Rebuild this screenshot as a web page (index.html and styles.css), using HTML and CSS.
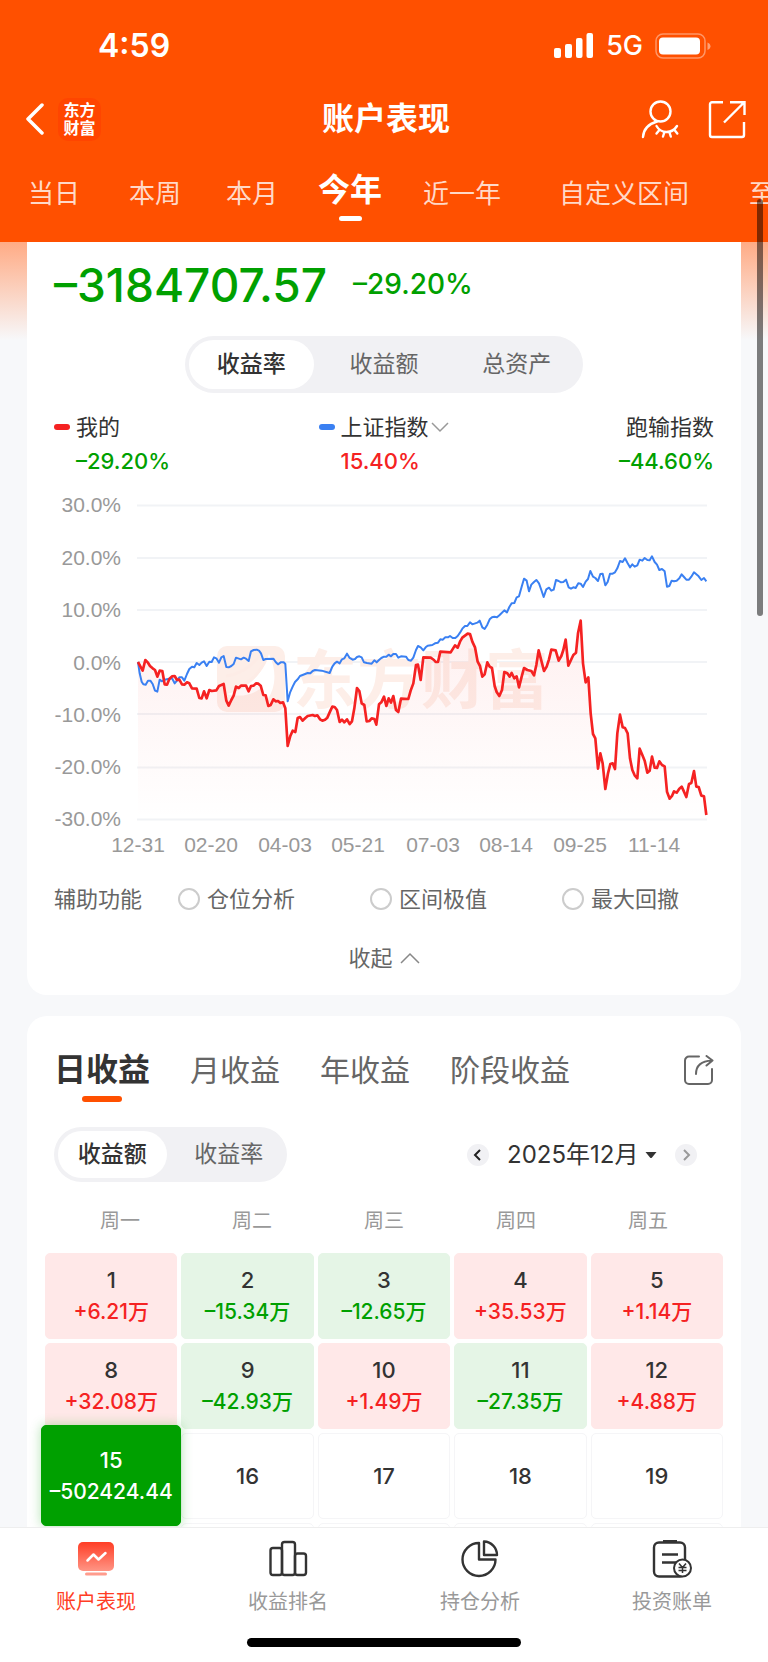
FILE: index.html
```
<!DOCTYPE html>
<html lang="zh-CN">

<head>
    <meta charset="UTF-8">
    <meta name="viewport" content="width=device-width, initial-scale=1.0">
    <title>账户表现</title>
    <link rel="stylesheet" href="styles.css">
</head>

<body>
    <div class="app">
        <header class="header">
            <div class="status-bar">
                <span class="time">4:59</span>
                <div class="status-icons">
                    <svg width="40" height="26" viewBox="0 0 40 26" fill="#fff">
                        <rect x="0" y="15" width="7" height="10" rx="2" />
                        <rect x="11" y="11" width="7" height="14" rx="2" />
                        <rect x="22" y="5" width="6.5" height="20" rx="2" />
                        <rect x="32.500" y="0" width="6.500" height="25" rx="2" />
                    </svg>
                    <span class="network">5G</span>
                    <svg width="56" height="26" viewBox="0 0 56 26">
                        <rect x="1" y="1" width="49" height="24" rx="7" fill="none" stroke="#fff" stroke-opacity=".4" stroke-width="1.5" />
                        <rect x="4" y="4.500" width="41" height="17" rx="4" fill="#fff" />
                        <path d="M52.500 9.500c4 1.500 4 6 0 7.500z" fill="#fff" fill-opacity=".45" />
                    </svg>
                </div>
            </div>

            <div class="title-bar">
                <div class="title-left">
                    <button class="icon-btn" aria-label="返回">
                        <svg width="18" height="32" viewBox="0 0 18 32" fill="none" stroke="#fff" stroke-width="3.500" stroke-linecap="round" stroke-linejoin="round">
                            <path d="M16 2L2 16l14 14" />
                        </svg>
                    </button>
                    <span class="brand">东方<br>财富</span>
                </div>
                <h1>账户表现</h1>
                <div class="title-right">
                    <button class="icon-btn" aria-label="隐藏账户">
                        <svg width="40" height="40" viewBox="0 0 40 40" fill="none" stroke="#fff" stroke-width="2.400" stroke-linecap="round">
                            <circle cx="20.500" cy="12.500" r="10" />
                            <path d="M17 22.500C8.500 25 3.500 30 3 38" />
                            <path d="M16.500 27c4.500 8 15.500 8 20.500 0M19 31.500l-2.500 3M24.300 33.500l-1.300 4M29.500 33.500l1.300 4M34.500 31l2.800 3.500" />
                        </svg>
                    </button>
                    <button class="icon-btn" aria-label="分享">
                        <svg width="40" height="40" viewBox="0 0 40 40" fill="none" stroke="#fff" stroke-width="2.400">
                            <path d="M17 3.200H6a2 2 0 0 0-2 2V36a2 2 0 0 0 2 2h30a2 2 0 0 0 2-2V23" />
                            <path d="M24 3.200h14.500V16M38 3.500L18 23.500" />
                        </svg>
                    </button>
                </div>
            </div>

            <nav class="period-tabs">
                <a href="#">当日</a>
                <a href="#">本周</a>
                <a href="#">本月</a>
                <a href="#" class="active">今年</a>
                <a href="#">近一年</a>
                <a href="#">自定义区间</a>
                <a href="#">至今</a>
            </nav>
        </header>

        <main class="content">
            <section class="card summary">
                <div class="total">
                    <span class="total-amount">–3184707.57</span>
                    <span class="total-rate">–29.20%</span>
                </div>

                <div class="segment segment-main">
                    <button class="active">收益率</button>
                    <button>收益额</button>
                    <button>总资产</button>
                </div>

                <div class="legend">
                    <div class="legend-item">
                        <div class="legend-name"><i class="dash red-bg"></i>我的</div>
                        <div class="legend-value down">–29.20%</div>
                    </div>
                    <div class="legend-item">
                        <div class="legend-name">
                            <i class="dash blue-bg"></i>
                            <select aria-label="对比指数">
                                <option>上证指数</option>
                            </select>
                            <svg width="20" height="12" viewBox="0 0 20 12" fill="none" stroke="#999" stroke-width="1.500">
                                <path d="M2 2l8 8 8-8" />
                            </svg>
                        </div>
                        <div class="legend-value up">15.40%</div>
                    </div>
                    <div class="legend-item">
                        <div class="legend-name">跑输指数</div>
                        <div class="legend-value down">–44.60%</div>
                    </div>
                </div>

                <svg class="chart" viewBox="0 0 660 370">
                    <defs>
                        <linearGradient id="areaFill" gradientUnits="userSpaceOnUse" x1="0" y1="390" x2="0" y2="990">
                            <stop offset="0" stop-color="#f52222" stop-opacity=".07" />
                            <stop offset="1" stop-color="#f52222" stop-opacity="0" />
                        </linearGradient>
                    </defs>
                    <g class="grid-lines">
                        <path d="M83 15.500H653M83 68H653M83 120H653M83 172H653M83 224H653M83 277.500H653M83 329.500H653" />
                    </g>
                    <g class="watermark">
                        <rect x="163" y="156" width="68" height="66" rx="10" />
                        <path d="M173 204c18-4 34-16 42-40 8 16 7 34-2 46-4-4-5-8-6-12-7 6-20 10-34 6z" fill="#fff" />
                        <path d="M172 186c14-2 27-10 36-24M176 199c16-3 30-14 37-32" stroke="#fdece6" stroke-width="3" fill="none" />
                        <text x="239" y="213">东方财富</text>
                    </g>
                    <!-- series share one 3x coordinate space -->
                    <g transform="translate(-14 0) scale(.33333)">
                        <path class="area" d="M294 516L308 542 316 510 330 528 345 540 352 560 359 542 367 543 374 583 381 584 388 567 404 558 411 570 418 569 426 583 433 584 441 577 448 580 456 595 470 596 478 624 485 625 492 604 500 625 508 600 515 603 529 601 537 588 551 582 559 632 566 647 574 630 581 617 588 590 596 594 603 587 618 587 626 604 633 588 641 587 648 580 655 581 662 587 670 615 677 616 685 648 692 645 700 628 707 634 714 633 721 639 729 637 736 655 743 768 751 738 758 722 766 726 773 684 780 681 788 692 803 678 832 676 847 692 862 683 877 650 891 660 899 696 906 689 913 697 921 688 929 702 936 694 943 655 951 594 958 603 965 640 973 645 980 694 995 685 1003 687 1009 704 1017 643 1032 620 1039 648 1046 625 1053 638 1060 618 1068 660 1075 666 1083 626 1105 627 1120 580 1128 525 1134 524 1142 570 1150 502 1172 503 1192 517 1201 485 1232 487 1245 466 1253 473 1267 443 1283 431 1290 432 1305 472 1313 515 1327 560 1342 517 1356 534 1364 588 1378 618 1386 600 1393 546 1409 560 1415 549 1423 565 1430 559 1437 592 1452 534 1474 543 1482 556 1496 481 1512 543 1534 479 1547 481 1556 512 1577 449 1585 527 1600 495 1608 488 1622 392 1637 577 1645 562 1659 732 1666 745 1674 836 1681 790 1696 897 1711 822 1725 837 1740 674 1763 730 1777 840 1792 865 1799 776 1822 848 1836 800 1844 833 1858 814 1874 829 1889 926 1925 890 1939 921 1962 843 1969 890 1984 917 1999 975V990H294z" />
                        <polyline class="line-index" points="294,516 299,550 305,575 310,583 317,584 324,572 331,572 338,582 345,602 352,605 359,569 366,574 374,569 388,566 396,565 404,580 411,572 418,562 426,562 433,572 441,552 448,537 456,530 463,532 470,519 478,525 485,518 492,514 500,528 508,515 515,516 522,502 529,505 537,518 544,502 551,498 559,531 566,532 574,528 581,522 588,503 603,508 611,503 618,506 626,513 633,484 641,480 650,479 657,482 663,490 670,510 677,507 700,506 707,516 714,523 722,517 731,517 736,522 743,634 750,608 758,590 765,576 773,568 780,558 803,549 811,550 818,543 825,540 845,542 869,549 877,530 884,520 891,515 899,520 906,508 913,505 921,491 929,504 938,509 945,507 951,501 958,499 965,502 972,517 981,519 995,521 1003,511 1010,517 1017,510 1024,504 1032,500 1039,500 1046,494 1053,499 1060,492 1068,492 1075,503 1083,499 1098,500 1105,510 1113,512 1120,503 1128,480 1134,468 1142,472 1150,481 1157,472 1163,467 1177,465 1185,460 1194,458 1201,448 1208,449 1216,442 1224,442 1230,438 1238,444 1246,444 1253,438 1260,428 1267,416 1275,408 1282,408 1290,397 1297,403 1312,398 1319,392 1327,412 1334,417 1342,404 1349,388 1356,382 1363,380 1371,382 1379,375 1393,361 1401,367 1408,351 1415,340 1423,339 1430,322 1437,319 1445,290 1452,266 1460,272 1467,304 1474,284 1482,276 1489,270 1497,280 1504,300 1511,321 1519,298 1527,293 1534,302 1541,299 1548,270 1556,273 1563,277 1570,276 1578,269 1586,292 1593,296 1600,292 1607,294 1615,280 1622,281 1629,291 1637,275 1644,267 1651,243 1659,260 1666,264 1674,273 1681,252 1688,251 1696,286 1703,276 1710,251 1718,251 1725,247 1732,235 1740,213 1748,216 1755,205 1763,220 1770,232 1777,223 1784,230 1792,226 1799,209 1807,212 1814,204 1822,210 1829,211 1836,199 1844,216 1851,224 1858,240 1866,237 1874,244 1881,290 1888,288 1895,272 1902,274 1910,272 1918,265 1925,253 1932,261 1939,269 1947,269 1954,260 1962,247 1969,253 1976,259 1984,270 1992,264 1999,274" />
                        <polyline class="line-mine" points="294,516 301,529 308,542 316,510 323,517 330,528 338,535 345,540 352,560 359,542 367,543 374,583 381,584 388,567 396,559 404,558 411,570 418,569 426,583 433,584 441,577 448,580 456,595 470,596 478,624 485,625 492,604 500,625 508,600 515,603 529,601 537,588 551,582 559,632 566,647 574,630 581,617 588,590 596,594 603,587 618,587 626,604 633,588 641,587 648,580 655,581 662,587 670,615 677,616 685,648 692,645 700,628 707,634 714,633 721,639 729,637 736,655 743,768 751,738 758,722 766,726 773,684 780,681 788,692 796,684 803,678 818,675 825,678 832,676 840,688 847,692 855,689 862,683 870,665 877,650 884,651 891,660 899,696 906,689 913,697 921,688 929,702 936,694 943,655 951,594 958,603 965,640 973,645 980,694 988,693 995,685 1003,687 1009,704 1017,643 1024,637 1032,620 1039,648 1046,625 1053,638 1060,618 1068,660 1075,666 1083,626 1105,627 1112,602 1120,580 1128,525 1134,524 1142,570 1150,502 1172,503 1182,510 1187,516 1194,516 1201,485 1232,487 1245,466 1253,473 1260,455 1267,443 1283,431 1290,432 1297,455 1305,472 1313,515 1320,528 1327,560 1334,553 1342,517 1349,530 1356,534 1364,588 1370,606 1378,618 1386,600 1393,546 1402,550 1409,560 1415,549 1423,565 1430,559 1437,592 1445,560 1452,534 1462,540 1474,543 1482,556 1489,525 1496,481 1504,512 1512,543 1520,530 1527,508 1534,479 1547,481 1556,512 1564,498 1570,480 1577,449 1585,527 1593,510 1600,495 1608,488 1614,430 1622,392 1629,520 1637,577 1645,562 1652,670 1659,732 1666,745 1674,836 1681,790 1688,820 1696,897 1704,850 1711,822 1718,820 1725,837 1732,730 1740,674 1748,712 1755,714 1763,730 1770,805 1777,840 1784,856 1792,865 1799,776 1807,795 1814,812 1822,848 1829,842 1836,800 1844,833 1851,834 1858,814 1866,825 1874,829 1881,905 1889,926 1896,918 1902,904 1910,908 1918,896 1925,890 1932,905 1939,921 1947,882 1954,879 1962,843 1969,890 1976,891 1984,917 1992,919 1999,975" />
                    </g>
                    <g class="y-labels">
                        <text x="67" y="22">30.0%</text>
                        <text x="67" y="75">20.0%</text>
                        <text x="67" y="127">10.0%</text>
                        <text x="67" y="180">0.0%</text>
                        <text x="67" y="232">-10.0%</text>
                        <text x="67" y="284">-20.0%</text>
                        <text x="67" y="336">-30.0%</text>
                    </g>
                    <g class="x-labels">
                        <text x="84" y="362">12-31</text>
                        <text x="157" y="362">02-20</text>
                        <text x="231" y="362">04-03</text>
                        <text x="304" y="362">05-21</text>
                        <text x="379" y="362">07-03</text>
                        <text x="452" y="362">08-14</text>
                        <text x="526" y="362">09-25</text>
                        <text x="600" y="362">11-14</text>
                    </g>
                </svg>

                <div class="assist">
                    <span>辅助功能</span>
                    <div class="assist-options">
                        <label><input type="radio" name="assist">仓位分析</label>
                        <label><input type="radio" name="assist">区间极值</label>
                        <label><input type="radio" name="assist">最大回撤</label>
                    </div>
                </div>

                <button class="collapse">
                    收起
                    <svg width="20" height="12" viewBox="0 0 20 12" fill="none" stroke="#888" stroke-width="1.500">
                        <path d="M1 11l9-9 9 9" />
                    </svg>
                </button>
            </section>

            <section class="card calendar">
                <div class="income-tabs">
                    <a href="#" class="active">日收益</a>
                    <a href="#">月收益</a>
                    <a href="#">年收益</a>
                    <a href="#">阶段收益</a>
                    <button class="icon-btn share" aria-label="分享收益">
                        <svg width="30" height="30" viewBox="0 0 30 30" fill="none" stroke="#666" stroke-width="2" stroke-linecap="round" stroke-linejoin="round">
                            <path d="M15 1.500H5a4 4 0 0 0-4 4V25a4 4 0 0 0 4 4h19a4 4 0 0 0 4-4V14" />
                            <path d="M12 19c0-8 5-13 16-13.500M22.500 1l6 4.500-6 5" />
                        </svg>
                    </button>
                </div>

                <div class="calendar-bar">
                    <div class="segment segment-small">
                        <button class="active">收益额</button>
                        <button>收益率</button>
                    </div>
                    <div class="month-picker">
                        <button class="month-btn" aria-label="上个月">
                            <svg width="22" height="22" viewBox="0 0 22 22" fill="none" stroke="#222" stroke-width="2">
                                <path d="M13 6l-5 5 5 5" />
                            </svg>
                        </button>
                        <label class="month">
                            <select aria-label="月份">
                                <option>2025年12月</option>
                            </select>
                            <svg width="12" height="8" viewBox="0 0 12 8" fill="#333">
                                <path d="M.5 1h11L7 6.500q-1 1-2 0z" />
                            </svg>
                        </label>
                        <button class="month-btn" aria-label="下个月">
                            <svg width="22" height="22" viewBox="0 0 22 22" fill="none" stroke="#999" stroke-width="2">
                                <path d="M9 6l5 5-5 5" />
                            </svg>
                        </button>
                    </div>
                </div>

                <div class="weekdays">
                    <span>周一</span>
                    <span>周二</span>
                    <span>周三</span>
                    <span>周四</span>
                    <span>周五</span>
                </div>

                <div class="days">
                    <button class="day gain">1<span>+6.21万</span></button>
                    <button class="day loss">2<span>–15.34万</span></button>
                    <button class="day loss">3<span>–12.65万</span></button>
                    <button class="day gain">4<span>+35.53万</span></button>
                    <button class="day gain">5<span>+1.14万</span></button>
                    <button class="day gain">8<span>+32.08万</span></button>
                    <button class="day loss">9<span>–42.93万</span></button>
                    <button class="day gain">10<span>+1.49万</span></button>
                    <button class="day loss">11<span>–27.35万</span></button>
                    <button class="day gain">12<span>+4.88万</span></button>
                    <button class="day selected">15<span>–502424.44</span></button>
                    <button class="day">16</button>
                    <button class="day">17</button>
                    <button class="day">18</button>
                    <button class="day">19</button>
                    <button class="day"></button>
                    <button class="day"></button>
                    <button class="day"></button>
                    <button class="day"></button>
                    <button class="day"></button>
                </div>
            </section>
        </main>

        <footer class="footer">
            <nav class="tab-bar">
                <a href="#" class="active">
                    <svg width="40" height="40" viewBox="0 0 40 40">
                        <defs>
                            <linearGradient id="tabFill" x1="0" y1="0" x2="0" y2="1">
                                <stop offset="0" stop-color="#ff3d25" />
                                <stop offset="1" stop-color="#ff9585" />
                            </linearGradient>
                        </defs>
                        <rect x="2" y="3" width="36" height="29" rx="5" fill="url(#tabFill)" />
                        <rect x="9" y="33.500" width="22" height="3" rx="1.500" fill="#ff9c8d" />
                        <path d="M11.500 21.500l6-6 5 5 7-6.500" fill="none" stroke="#fff" stroke-width="2.500" stroke-linecap="round" stroke-linejoin="round" />
                    </svg>
                    账户表现
                </a>
                <a href="#">
                    <svg width="40" height="40" viewBox="0 0 40 40" fill="none" stroke="#333" stroke-width="2.400">
                        <rect x="2.500" y="9" width="11.500" height="27" rx="2.500" />
                        <rect x="14" y="3" width="13" height="33" rx="2.500" />
                        <rect x="27" y="14.500" width="11" height="21.500" rx="2.500" />
                    </svg>
                    收益排名
                </a>
                <a href="#">
                    <svg width="40" height="40" viewBox="0 0 40 40" fill="none" stroke="#333" stroke-width="2.400" stroke-linejoin="round">
                        <path d="M19 4A16.500 16.500 0 1 0 35.500 20.500H19z" />
                        <path d="M24 2.500A13.500 13.500 0 0 1 37 16H24z" />
                    </svg>
                    持仓分析
                </a>
                <a href="#">
                    <svg width="40" height="40" viewBox="0 0 40 40" fill="none" stroke="#333" stroke-width="2.400">
                        <rect x="2" y="3.500" width="31" height="34" rx="5" />
                        <path d="M11 2.500h14" stroke-width="3" />
                        <path d="M10 15.500h16M10 23.500h15" />
                        <circle cx="30.500" cy="29" r="8.500" fill="#fff" stroke-width="2" />
                        <path d="M27 24.500l3.500 4 3.500-4M30.500 28.500V34M26.500 28.500h8M26.500 31.500h8" stroke-width="1.500" />
                    </svg>
                    投资账单
                </a>
            </nav>
            <div class="home-indicator"></div>
        </footer>

        <div class="scrollbar"></div>
    </div>
</body>

</html>
```
FILE: styles.css
```
* {
    margin: 0;
    padding: 0;
    box-sizing: border-box;
}

body {
    font-family: Inter, "Noto Sans CJK SC", sans-serif;
    line-height: 1.4;
    background-color: #f7f8fa;
    color: #333;
}

button,
select {
    font-family: inherit;
    font-size: inherit;
    font-weight: inherit;
    line-height: inherit;
    color: inherit;
    background: none;
    border: none;
    cursor: pointer;
}

select {
    appearance: none;
}

a {
    color: inherit;
    text-decoration: none;
}

svg {
    display: block;
    flex-shrink: 0;
}

.app {
    position: relative;
    display: flex;
    flex-direction: column;
    height: 100vh;
    overflow: hidden;
}

/* Header */
.header {
    flex-shrink: 0;
    background-color: #ff5000;
    color: white;
}

.status-bar {
    display: flex;
    align-items: center;
    justify-content: space-between;
    height: 92px;
    padding: 0 57px 0 98px;
}

.time {
    font-size: 32px;
    font-weight: 600;
}

.status-icons {
    display: flex;
    align-items: center;
    gap: 12px;
}

.network {
    font-size: 27px;
    font-weight: 500;
}

.title-bar {
    display: grid;
    grid-template-columns: 1fr auto 1fr;
    align-items: center;
    height: 54px;
    padding: 0 22px 0 26px;
}

.title-bar h1 {
    font-size: 32px;
    font-weight: 700;
}

.title-left {
    display: flex;
    align-items: center;
    gap: 14px;
}

.title-right {
    display: flex;
    justify-content: flex-end;
    gap: 26px;
}

.brand {
    width: 43px;
    padding: 3px 0 4px;
    border-radius: 10px;
    background-color: #ff4500;
    font-size: 16px;
    font-weight: 700;
    line-height: 18px;
    text-align: center;
}

.period-tabs {
    display: grid;
    grid-template-columns: 100px 102px 92px 104px 120px 204px 98px;
    align-items: center;
    height: 96px;
    padding-left: 4px;
    overflow: hidden;
    font-size: 26px;
    text-align: center;
    color: #ffd9c8;
}

.period-tabs .active {
    position: relative;
    padding-bottom: 8px;
    font-size: 32px;
    font-weight: 700;
    color: white;
}

.period-tabs .active::after {
    content: "";
    position: absolute;
    left: 50%;
    bottom: -1px;
    width: 23px;
    height: 5px;
    margin-left: -11px;
    border-radius: 3px;
    background-color: white;
}

/* Content */
.content {
    flex: 1;
    min-height: 0;
    overflow: hidden;
    padding: 0 27px;
    background: linear-gradient(#ffab85, #f7f8fa) no-repeat top / 100% 98px;
}

.card {
    background-color: white;
    border-radius: 20px;
    padding: 0 27px;
}

.summary {
    border-radius: 0 0 20px 20px;
    padding-top: 15px;
    padding-bottom: 22px;
}

.total {
    display: flex;
    align-items: center;
    gap: 26px;
    height: 56px;
    color: #00a000;
}

.total-amount {
    font-size: 46px;
    font-weight: 500;
}

.total-rate {
    font-size: 28px;
    font-weight: 500;
}

.up {
    color: #f52222;
}

.down {
    color: #00a000;
}

.segment {
    display: grid;
    grid-auto-flow: column;
    grid-auto-columns: 1fr;
    border-radius: 29px;
    background-color: #f1f1f4;
    font-size: 23px;
    color: #666;
}

.segment button {
    margin: 4px;
    border-radius: 25px;
}

.segment .active {
    background-color: white;
    font-weight: 500;
    color: #333;
}

.segment-main {
    width: 398px;
    height: 57px;
    margin: 23px auto 17px;
}

.segment-small {
    width: 233px;
    height: 55px;
}

.legend {
    display: grid;
    grid-template-columns: repeat(3, 1fr);
    font-size: 22px;
    line-height: 34px;
}

.legend-item {
    justify-self: start;
}

.legend-item:nth-child(2) {
    justify-self: center;
}

.legend-item:nth-child(3) {
    justify-self: end;
    text-align: right;
}

.legend-name {
    display: flex;
    align-items: center;
    justify-content: flex-end;
    height: 34px;
}

.legend-item:first-child .legend-name {
    justify-content: flex-start;
}

.legend-value {
    font-weight: 500;
}

.legend-item:not(:last-child) .legend-value {
    padding-left: 22px;
}

.dash {
    width: 16px;
    height: 6px;
    margin-right: 6px;
    border-radius: 3px;
}

.red-bg {
    background-color: #f52222;
}

.blue-bg {
    background-color: #3a80f2;
}

/* Chart */
.chart {
    width: 100%;
    height: auto;
    margin-top: 12px;
}

.grid-lines path {
    stroke: #f1f3f6;
    stroke-width: 2;
}

.watermark rect,
.watermark text {
    fill: #fdeee8;
}

.watermark text {
    font-size: 64px;
    font-weight: 700;
}

.area {
    fill: url(#areaFill);
}

.line-index,
.line-mine {
    fill: none;
    stroke-linejoin: round;
}

.line-index {
    stroke: #3a80f2;
    stroke-width: 6;
}

.line-mine {
    stroke: #f52222;
    stroke-width: 8;
}

.x-labels text,
.y-labels text {
    font-family: "Liberation Sans", Arial, sans-serif;
    font-size: 21px;
    fill: #999;
    text-anchor: middle;
}

.y-labels text {
    text-anchor: end;
}

.assist {
    display: flex;
    align-items: center;
    gap: 36px;
    height: 30px;
    margin-top: 24px;
    font-size: 22px;
    color: #666;
}

.assist-options {
    display: flex;
    gap: 75px;
}

.assist label {
    display: flex;
    align-items: center;
    gap: 7px;
}

.assist input {
    appearance: none;
    width: 22px;
    height: 22px;
    border: 2px solid #ccc;
    border-radius: 50%;
}

.collapse {
    display: flex;
    align-items: center;
    gap: 7px;
    height: 30px;
    margin: 29px auto 0;
    font-size: 22px;
    color: #666;
}

/* Calendar */
.calendar {
    margin-top: 21px;
    padding-top: 32px;
}

.income-tabs {
    display: flex;
    align-items: center;
    gap: 40px;
    height: 44px;
    font-size: 30px;
    color: #666;
}

.income-tabs .active {
    position: relative;
    font-size: 32px;
    font-weight: 700;
    color: #333;
}

.income-tabs .active::after {
    content: "";
    position: absolute;
    left: 50%;
    bottom: -10px;
    width: 40px;
    height: 6px;
    margin-left: -20px;
    border-radius: 3px;
    background-color: #ff5000;
}

.share {
    margin-left: auto;
}

.calendar-bar {
    display: flex;
    align-items: center;
    justify-content: space-between;
    margin-top: 35px;
}

.month-picker {
    display: flex;
    align-items: center;
    gap: 18px;
    padding-right: 17px;
}

.month-btn {
    border-radius: 50%;
    background-color: #f1f1f4;
}

.month {
    display: flex;
    align-items: center;
    gap: 6px;
    font-size: 24px;
}

.weekdays {
    display: grid;
    grid-template-columns: repeat(5, 1fr);
    margin-top: 24px;
    font-size: 20px;
    line-height: 30px;
    text-align: center;
    color: #999;
}

.days {
    display: grid;
    grid-template-columns: repeat(5, 1fr);
    grid-auto-rows: 86px;
    gap: 4px;
    margin: 17px -9px 0;
}

.day {
    display: flex;
    flex-direction: column;
    align-items: center;
    justify-content: center;
    border: 1px solid #f5f5f7;
    border-radius: 5px;
    font-size: 22px;
    font-weight: 500;
    line-height: 31px;
}

.day span {
    font-size: 21px;
}

.gain {
    border-color: #ffe8e8;
    background-color: #ffe8e8;
}

.gain span {
    color: #f52222;
}

.loss {
    border-color: #e5f5e6;
    background-color: #e5f5e6;
}

.loss span {
    color: #00a000;
}

.selected {
    z-index: 1;
    margin: -8px -4px -7px;
    border-color: #00a000;
    background-color: #00a000;
    box-shadow: 0 0 12px rgba(0, 160, 0, 0.3);
    color: white;
}

/* Footer */
.footer {
    flex-shrink: 0;
    z-index: 2;
    padding-bottom: 15px;
    border-top: 1px solid #eee;
    background-color: white;
}

.tab-bar {
    display: grid;
    grid-template-columns: repeat(4, 1fr);
    padding: 11px 0 21px;
    font-size: 20px;
    line-height: 30px;
    color: #999;
}

.tab-bar a {
    display: flex;
    flex-direction: column;
    align-items: center;
    gap: 8px;
}

.tab-bar .active {
    color: #ff3d25;
}

.home-indicator {
    width: 274px;
    height: 9px;
    margin: 0 auto;
    border-radius: 5px;
    background-color: black;
}

.scrollbar {
    position: absolute;
    z-index: 3;
    top: 199px;
    right: 5px;
    width: 6px;
    height: 417px;
    border-radius: 3px;
    background-color: rgba(0, 0, 0, 0.5);
}
```
